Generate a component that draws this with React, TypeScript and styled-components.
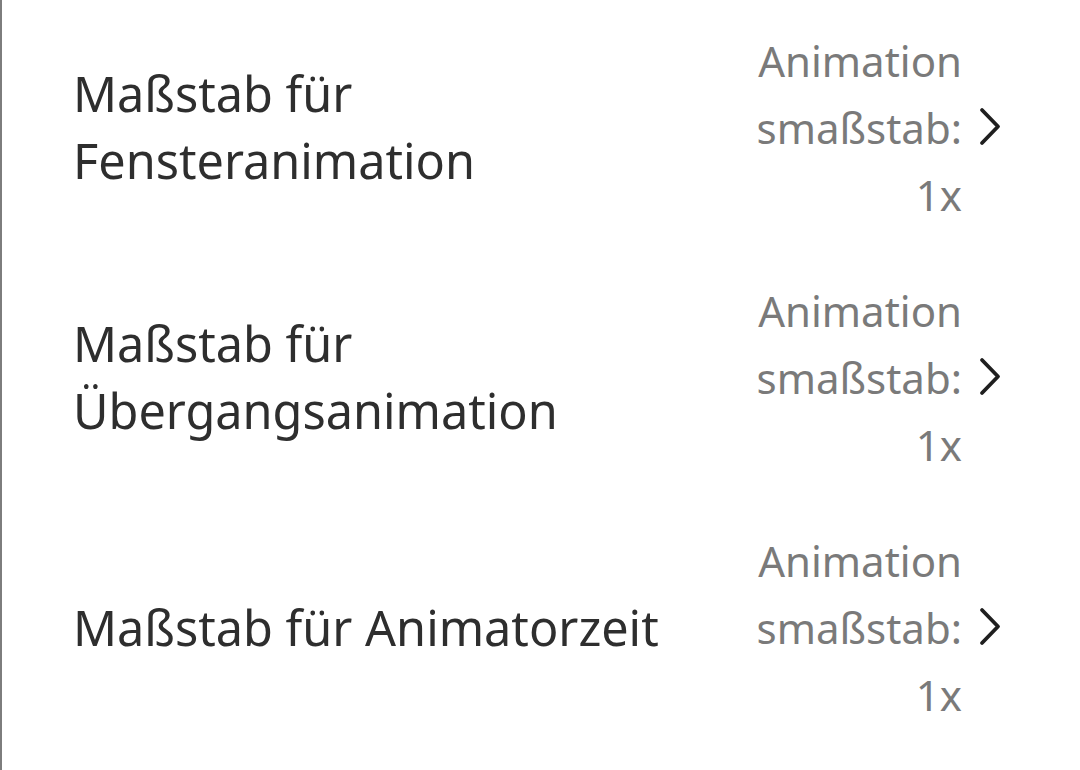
import React from "react";
import styled, { createGlobalStyle } from "styled-components";

const GlobalStyle = createGlobalStyle`
  html, body {
    margin: 0;
    padding: 0;
    background: #ffffff;
  }
  body {
    font-family: "Noto Sans", "Open Sans", sans-serif;
  }
`;

type Item = {
  title: string[];
  value: string[];
};

const items: Item[] = [
  { title: ["Maßstab für", "Fensteranimation"], value: ["Animation", "smaßstab:", "1x"] },
  { title: ["Maßstab für", "Übergangsanimation"], value: ["Animation", "smaßstab:", "1x"] },
  { title: ["Maßstab für Animatorzeit"], value: ["Animation", "smaßstab:", "1x"] },
];

function Chevron() {
  return (
    <ChevronSvg width="24" height="40" viewBox="0 0 24 40">
      <polyline
        points="4,3 20,19.5 4,36"
        fill="none"
        stroke="#1f1f1f"
        strokeWidth="3.8"
        strokeLinecap="round"
        strokeLinejoin="round"
      />
    </ChevronSvg>
  );
}

export default function App() {
  return (
    <>
      <GlobalStyle />
      <SPage>
        {items.map((item, i) => (
          <SRow key={i}>
            <STitle>
              {item.title.map((line) => (
                <span key={line}>{line}</span>
              ))}
            </STitle>
            <SValue>
              {item.value.map((line) => (
                <span key={line}>{line}</span>
              ))}
            </SValue>
            <Chevron />
          </SRow>
        ))}
      </SPage>
    </>
  );
}

const SPage = styled.div`
  width: 1080px;
  height: 770px;
  box-sizing: border-box;
  border-left: 2px solid #7d7d7d;
  padding-top: 2px;
  display: flex;
  flex-direction: column;
  overflow: hidden;
`;

const SRow = styled.div`
  height: 250px;
  display: flex;
  align-items: center;
  padding: 0 78px 0 71px;
`;

const STitle = styled.div`
  flex: 1;
  min-width: 0;
  display: flex;
  flex-direction: column;
  font-size: 48.6px;
  line-height: 67px;
  color: #2e2e2e;
`;

const SValue = styled.div`
  display: flex;
  flex-direction: column;
  align-items: flex-end;
  margin-left: 60px;
  font-size: 42px;
  line-height: 67px;
  color: #7a7a7a;
`;

const ChevronSvg = styled.svg`
  flex: none;
  margin-left: 16px;
`;
